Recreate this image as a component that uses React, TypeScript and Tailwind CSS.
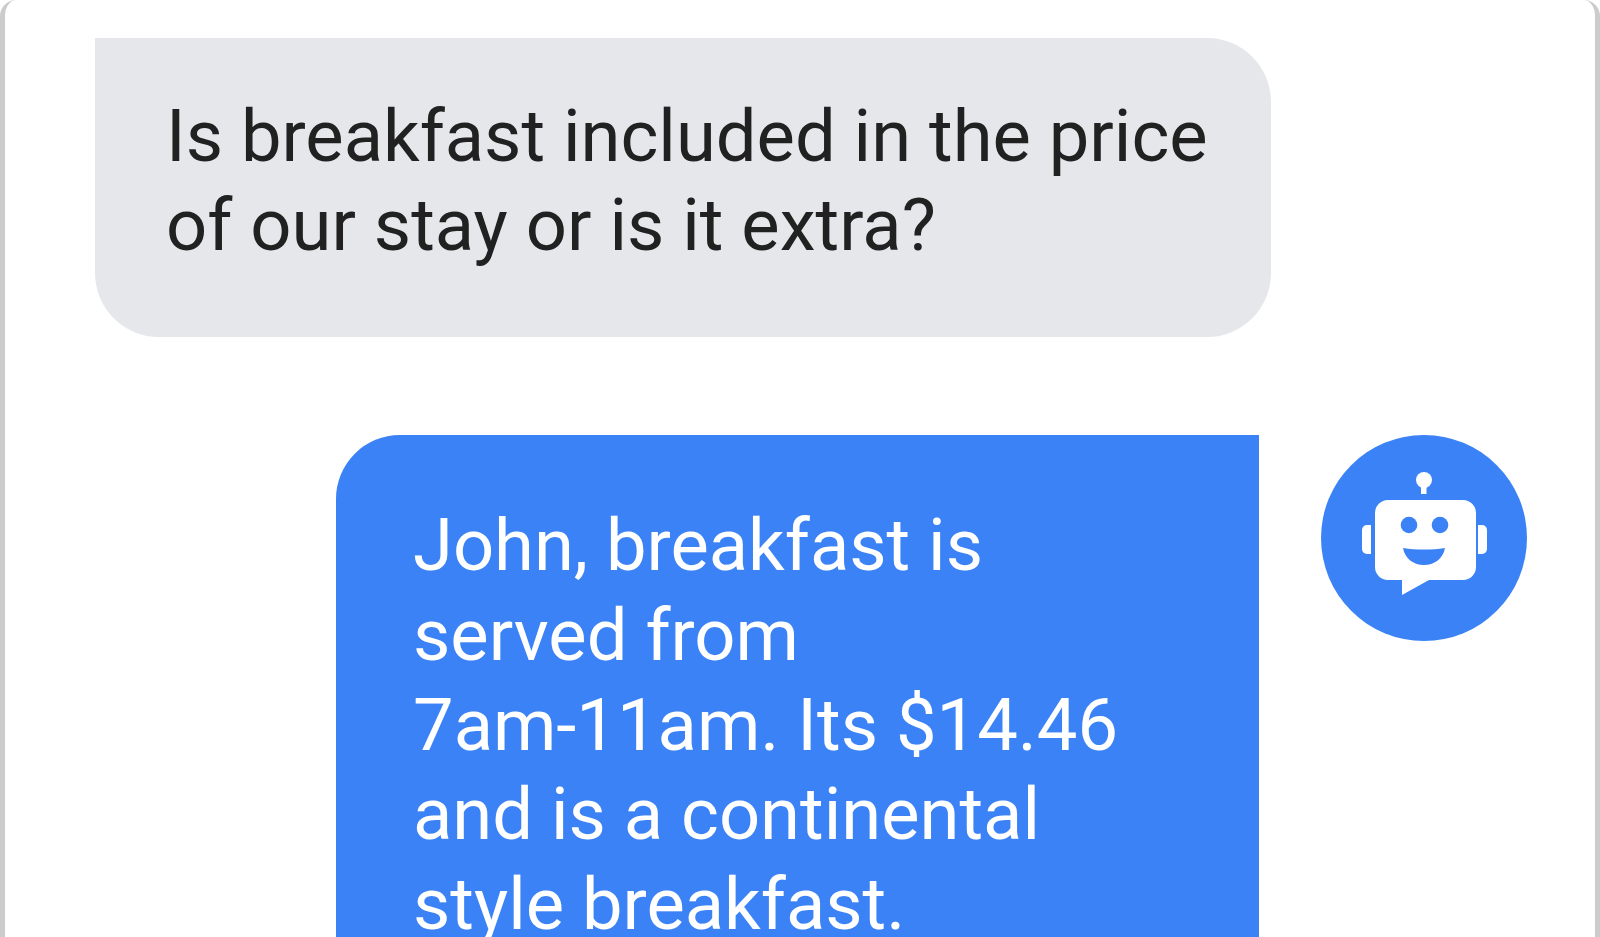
import React from "react";

function BotIcon() {
  return (
    <svg viewBox="0 0 206 206" className="h-full w-full" fill="none">
      <circle cx="103" cy="45" r="8" fill="#fff" />
      <rect x="100" y="48" width="5.5" height="11" fill="#fff" />
      <path
        d="M67 65h75a13 13 0 0 1 13 13v54a13 13 0 0 1-13 13h-34l-27 15 0-15H67a13 13 0 0 1-13-13V78a13 13 0 0 1 13-13z"
        fill="#fff"
      />
      <path d="M50 90v29h-4a5 5 0 0 1-5-5V95a5 5 0 0 1 5-5z" fill="#fff" />
      <path d="M157 90v29h4a5 5 0 0 0 5-5V95a5 5 0 0 0-5-5z" fill="#fff" />
      <circle cx="88" cy="90" r="8.300" fill="#3b82f6" />
      <circle cx="119" cy="90" r="8.300" fill="#3b82f6" />
      <path d="M82 113c13 2 29 2 42 0-2 11-11 17-21 17S84 124 82 113z" fill="#3b82f6" />
    </svg>
  );
}

export default function App() {
  return (
    <div className="h-[937px] w-full overflow-hidden bg-white font-['Roboto',sans-serif] text-[72.3px] leading-[89px]">
      <div className="min-h-[1100px] rounded-t-[16px] border-x-[5px] border-[#cccccc] pt-[38px]">
        <div className="ml-[90px] w-[1176px] rounded-[64px] rounded-tl-none bg-[#e5e7eb] pt-[54px] pr-[50px] pb-[67px] pl-[71px] text-[#212121]">
          Is breakfast included in the price of our stay or is it extra?
        </div>
        <div className="mt-[98px] flex items-start justify-end pr-[68px]">
          <div className="w-[923px] rounded-[64px] rounded-tr-none bg-[#3b82f6] pt-[66px] pr-[100px] pb-[60px] pl-[77px] leading-[89.8px] text-white">
            John, breakfast is served from <span className="whitespace-nowrap">7am-11am.</span> Its $14.46 and is a continental style breakfast.
          </div>
          <div className="ml-[62px] h-[206px] w-[206px] shrink-0 rounded-full bg-[#3b82f6]">
            <BotIcon />
          </div>
        </div>
      </div>
    </div>
  );
}
